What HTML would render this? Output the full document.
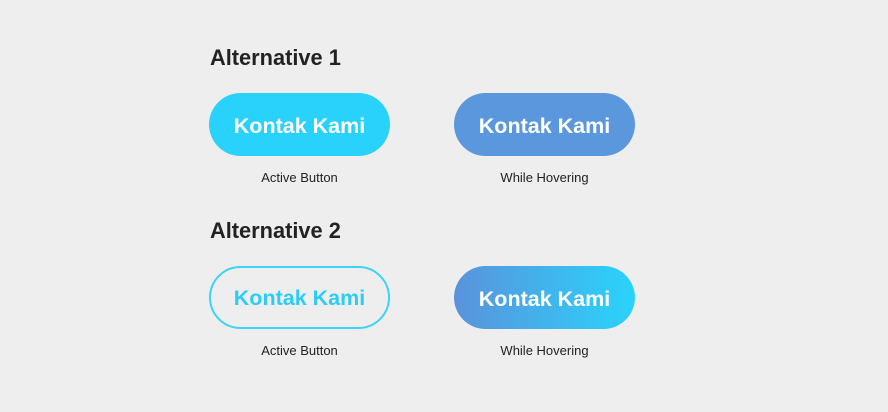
<!DOCTYPE html>
<html><head><style>
body{margin:0;width:888px;height:412px;background:#eeeeee;font-family:"Liberation Sans",Arial,sans-serif;position:relative;overflow:hidden}
.h{position:absolute;left:210px;font-size:21.8px;font-weight:bold;color:#222}
.b{position:absolute;width:181px;height:63px;border-radius:32px;box-sizing:border-box;display:flex;align-items:center;justify-content:center;font-size:21.5px;font-weight:bold;color:#fff;padding-top:3px}
.l{position:absolute;width:181px;text-align:center;font-size:13px;color:#222}
</style></head><body>
<div class="h" style="top:45px">Alternative 1</div>
<div class="b" style="left:209px;top:93px;background:#29d2fb">Kontak Kami</div>
<div class="b" style="left:454px;top:93px;background:#5b97dd">Kontak Kami</div>
<div class="l" style="left:209px;top:170px">Active Button</div>
<div class="l" style="left:454px;top:170px">While Hovering</div>
<div class="h" style="top:218px">Alternative 2</div>
<div class="b" style="left:209px;top:266px;border:2px solid #3dd3f8;color:#2bcdf8;padding-top:1px">Kontak Kami</div>
<div class="b" style="left:454px;top:266px;background:linear-gradient(90deg,#5a92db,#29d4fc)">Kontak Kami</div>
<div class="l" style="left:209px;top:343px">Active Button</div>
<div class="l" style="left:454px;top:343px">While Hovering</div>
</body></html>
